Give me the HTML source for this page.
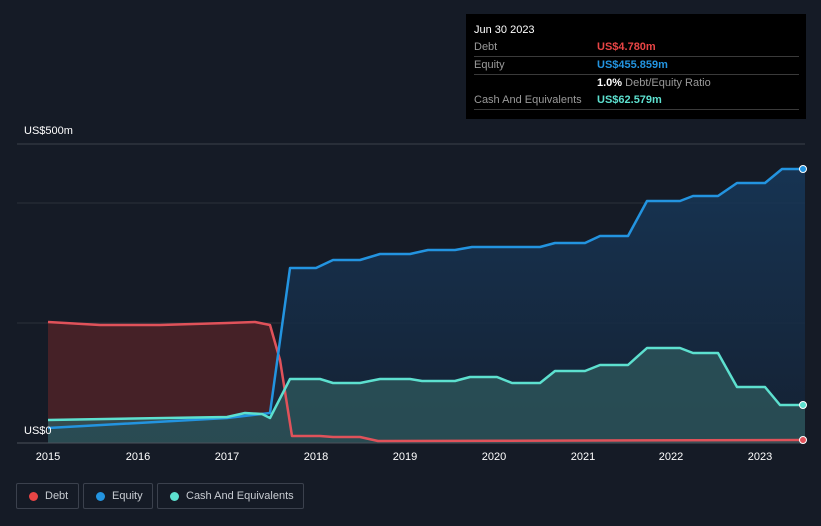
<!DOCTYPE html>
<html><head><style>
body{margin:0;width:821px;height:526px;background:#151b26;font-family:"Liberation Sans",sans-serif;overflow:hidden;position:relative}
.tt{position:absolute;left:466px;top:14px;width:340px;height:105px;background:#000;color:#fff;font-size:11px}
.tt .r{position:absolute;left:8px;width:325px;border-bottom:1px solid #3a3a3a;height:17px;line-height:17px}
.lab{color:#9a9a9a}
.v{position:absolute;left:123px;top:0;white-space:nowrap}
.leg{position:absolute;top:483px;height:26px;border:1px solid #3b414d;border-radius:2px;color:#c8ccd2;font-size:11px;line-height:24px;box-sizing:border-box;white-space:nowrap}
.leg i{position:absolute;left:12px;top:8px;width:9px;height:9px;border-radius:50%}
.yr{position:absolute;top:451px;color:#fff;font-size:11px;width:40px;text-align:center;margin-left:-20px}
</style></head><body>
<svg width="821" height="526" style="position:absolute;left:0;top:0">
<defs>
<linearGradient id="ge" x1="0" y1="0" x2="0" y2="1"><stop offset="0" stop-color="#17385a"/><stop offset="1" stop-color="#142235"/></linearGradient>
</defs>
<line x1="17" y1="144" x2="805" y2="144" stroke="#3a404b"/>
<line x1="17" y1="203" x2="805" y2="203" stroke="#2a303b"/>
<line x1="17" y1="323" x2="805" y2="323" stroke="#2a303b"/>
<path d="M48,322 L100,325 L160,325 L227,323 L255,322 L270,325 L280,360 L292,436 L320,436 L333,437 L360,437 L378,441 L805,440 L805,443 L48,443Z" fill="#4a2228" opacity=".9"/>
<path d="M48,428 L227,418 L270,413 L290,268 L316,268 L333,260 L360,260 L380,254 L410,254 L428,250 L455,250 L472,247 L540,247 L555,243 L585,243 L600,236 L628,236 L647,201 L680,201 L693,196 L718,196 L737,183 L765,183 L782,169 L805,169 L805,443 L48,443Z" fill="url(#ge)" opacity=".85"/>
<path d="M48,420 L227,417 L245,413 L262,414 L270,418 L290,379 L320,379 L333,383 L360,383 L380,379 L410,379 L422,381 L455,381 L470,377 L497,377 L512,383 L540,383 L555,371 L585,371 L600,365 L628,365 L647,348 L680,348 L693,353 L718,353 L737,387 L765,387 L780,405 L805,405 L805,443 L48,443Z" fill="#2f5a5e" opacity=".75"/>
<path d="M48,322 L100,325 L160,325 L227,323 L255,322 L270,325 L280,360 L292,436 L320,436 L333,437 L360,437 L378,441 L805,440" fill="none" stroke="#e0525a" stroke-width="2.5" stroke-linejoin="round"/>
<path d="M48,428 L227,418 L270,413 L290,268 L316,268 L333,260 L360,260 L380,254 L410,254 L428,250 L455,250 L472,247 L540,247 L555,243 L585,243 L600,236 L628,236 L647,201 L680,201 L693,196 L718,196 L737,183 L765,183 L782,169 L805,169" fill="none" stroke="#2394e0" stroke-width="2.5" stroke-linejoin="round"/>
<path d="M48,420 L227,417 L245,413 L262,414 L270,418 L290,379 L320,379 L333,383 L360,383 L380,379 L410,379 L422,381 L455,381 L470,377 L497,377 L512,383 L540,383 L555,371 L585,371 L600,365 L628,365 L647,348 L680,348 L693,353 L718,353 L737,387 L765,387 L780,405 L805,405" fill="none" stroke="#5de0cf" stroke-width="2.5" stroke-linejoin="round"/>
<line x1="17" y1="443" x2="805" y2="443" stroke="#4a505b"/>
<circle cx="803" cy="169" r="3.5" fill="#2394e0" stroke="#fff"/>
<circle cx="803" cy="405" r="3.5" fill="#5de0cf" stroke="#fff"/>
<circle cx="803" cy="440" r="3.5" fill="#e0525a" stroke="#fff"/>
</svg>
<div style="position:absolute;left:24px;top:125px;color:#fff;font-size:11px">US$500m</div>
<div style="position:absolute;left:24px;top:425px;color:#fff;font-size:11px">US$0</div>
<div class="yr" style="left:48px">2015</div><div class="yr" style="left:138px">2016</div><div class="yr" style="left:227px">2017</div><div class="yr" style="left:316px">2018</div><div class="yr" style="left:405px">2019</div><div class="yr" style="left:494px">2020</div><div class="yr" style="left:583px">2021</div><div class="yr" style="left:671px">2022</div><div class="yr" style="left:760px">2023</div>
<div class="tt">
<div style="position:absolute;left:8px;top:10px">Jun 30 2023</div>
<div class="r" style="top:25px"><span class="lab">Debt</span><span class="v" style="color:#e84545;font-weight:bold">US$4.780m</span></div>
<div class="r" style="top:43px"><span class="lab">Equity</span><span class="v" style="color:#2394e0;font-weight:bold">US$455.859m</span></div>
<div class="r" style="top:61px;border:0"><span class="v"><b>1.0%</b> <span class="lab">Debt/Equity Ratio</span></span></div>
<div class="r" style="top:78px"><span class="lab">Cash And Equivalents</span><span class="v" style="color:#5de0cf;font-weight:bold">US$62.579m</span></div>
</div>
<div class="leg" style="left:16px;width:63px"><i style="background:#e84545"></i><span style="margin-left:28px">Debt</span></div>
<div class="leg" style="left:83px;width:70px"><i style="background:#2394e0"></i><span style="margin-left:28px">Equity</span></div>
<div class="leg" style="left:157px;width:147px"><i style="background:#5de0cf"></i><span style="margin-left:28px">Cash And Equivalents</span></div>
</body></html>
